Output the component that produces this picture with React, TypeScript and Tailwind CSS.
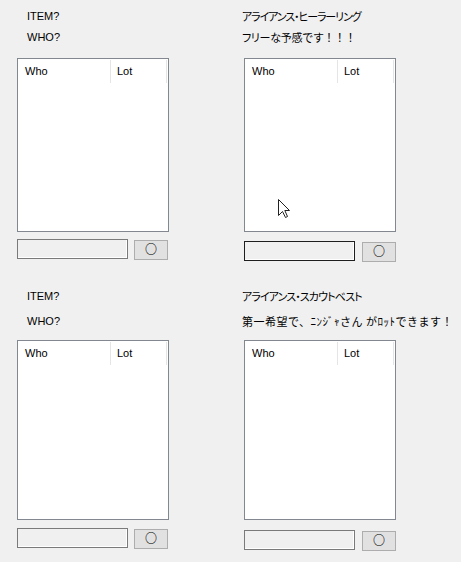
import React from "react";

type PanelProps = {
  lines: React.ReactNode[];
  labelGap: string;
  listMt: string;
  listH: string;
  boxMt: string;
  right?: boolean;
  focused?: boolean;
  cursor?: boolean;
};

function Cursor() {
  return (
    <svg
      className="absolute left-[33px] top-[140px]"
      width="13"
      height="20"
      viewBox="0 0 13 20"
    >
      <path
        d="M0.5 0.5 L0.5 16.5 L4.5 12.5 L7.5 18.5 L9.5 17.5 L6.8 11.5 L11.5 11.5 Z"
        fill="#fff"
        stroke="#222"
        strokeWidth="1"
        strokeLinejoin="miter"
      />
    </svg>
  );
}

function Panel({ lines, labelGap, listMt, listH, boxMt, right, focused, cursor }: PanelProps) {
  const labelFont = right
    ? "font-['Noto_Sans_CJK_JP',sans-serif] -ml-[2px]"
    : "font-['Liberation_Sans',sans-serif] ml-[10px]";

  return (
    <div className="flex flex-col pt-[8px]">
      <div className={`flex flex-col ${labelGap}`}>
        {lines.map((line, i) => (
          <div key={i} className={`${labelFont} whitespace-nowrap text-[11px] leading-[16px] text-black`}>
            {line}
          </div>
        ))}
      </div>

      <div className={`relative ${listMt} ${listH} w-[152px] border border-[#828790] bg-white`}>
        <div className="flex h-[24px] font-['Liberation_Sans',sans-serif] text-[11px] leading-[16px] text-black">
          <div className="w-[92px] pl-[7px] pt-[4px]">Who</div>
          <div className="mt-px h-[23px] w-px bg-[#e5e5e5]" />
          <div className="w-[55px] pl-[6px] pt-[4px]">Lot</div>
          <div className="mt-px h-[23px] w-px bg-[#e5e5e5]" />
        </div>
        {cursor && <Cursor />}
      </div>

      <div className={`flex items-start ${boxMt}`}>
        <div
          className={`h-[20px] w-[111px] border bg-[#f0f0f0] shadow-[inset_-1px_-1px_0_#fff] ${
            focused ? "border-[#1e1e1e]" : "border-[#7a7a7a]"
          }`}
        />
        <button
          className={`mt-px flex h-[20px] w-[34px] items-center justify-center border border-[#adadad] bg-[#e1e1e1] pb-[3px] font-['Noto_Sans_CJK_JP',sans-serif] text-[12px] font-bold leading-none text-black ${
            right ? "ml-[7px]" : "ml-[6px]"
          }`}
        >
          ○
        </button>
      </div>
    </div>
  );
}

export default function App() {
  const palt = "[font-feature-settings:'palt']";

  return (
    <div className="min-h-screen w-full bg-[#f0f0f0] pl-[17px]">
      <div className="flex h-[280px]">
        <div className="w-[227px]">
          <Panel
            lines={["ITEM?", "WHO?"]}
            labelGap="gap-[5px]"
            listMt="mt-[13px]"
            listH="h-[174px]"
            boxMt="mt-[7px]"
          />
        </div>
        <div>
          <Panel
            right
            focused
            cursor
            lines={[
              <span className={`${palt} tracking-[-1.1px]`}>アライアンス・ヒーラーリング</span>,
              <span className="tracking-[-0.3px]">
                <span className={palt}>フリー</span>な予感です！！！
              </span>,
            ]}
            labelGap="gap-[5px]"
            listMt="mt-[13px]"
            listH="h-[174px]"
            boxMt="mt-[9px]"
          />
        </div>
      </div>

      <div className="flex">
        <div className="w-[227px]">
          <Panel
            lines={["ITEM?", "WHO?"]}
            labelGap="gap-[9px]"
            listMt="mt-[11px]"
            listH="h-[180px]"
            boxMt="mt-[8px]"
          />
        </div>
        <div>
          <Panel
            right
            lines={[
              <span className={`${palt} tracking-[-0.9px]`}>アライアンス・スカウトベスト</span>,
              <span className="tracking-[0.5px]">第一希望で、ﾆﾝｼﾞｬさん がﾛｯﾄできます！</span>,
            ]}
            labelGap="gap-[9px]"
            listMt="mt-[11px]"
            listH="h-[180px]"
            boxMt="mt-[10px]"
          />
        </div>
      </div>
    </div>
  );
}
